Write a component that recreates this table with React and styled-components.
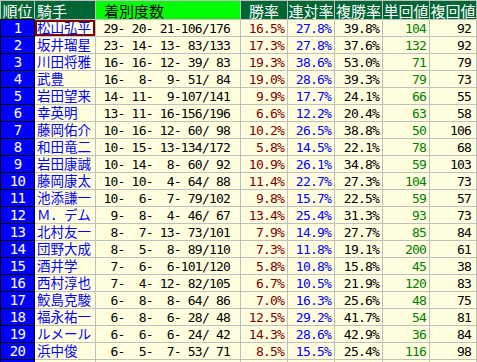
import React from "react";
import styled, { createGlobalStyle } from "styled-components";

const rows = [
  ["松山弘平", [29, 20, 21, 106, 176], "16.5%", "27.8%", "39.8%", 104, 92],
  ["坂井瑠星", [23, 14, 13, 83, 133], "17.3%", "27.8%", "37.6%", 132, 92],
  ["川田将雅", [16, 16, 12, 39, 83], "19.3%", "38.6%", "53.0%", 71, 79],
  ["武豊", [16, 8, 9, 51, 84], "19.0%", "28.6%", "39.3%", 79, 73],
  ["岩田望来", [14, 11, 9, 107, 141], "9.9%", "17.7%", "24.1%", 66, 55],
  ["幸英明", [13, 11, 16, 156, 196], "6.6%", "12.2%", "20.4%", 63, 58],
  ["藤岡佑介", [10, 16, 12, 60, 98], "10.2%", "26.5%", "38.8%", 50, 106],
  ["和田竜二", [10, 15, 13, 134, 172], "5.8%", "14.5%", "22.1%", 78, 68],
  ["岩田康誠", [10, 14, 8, 60, 92], "10.9%", "26.1%", "34.8%", 59, 103],
  ["藤岡康太", [10, 10, 4, 64, 88], "11.4%", "22.7%", "27.3%", 104, 73],
  ["池添謙一", [10, 6, 7, 79, 102], "9.8%", "15.7%", "22.5%", 59, 57],
  ["Ｍ．デム", [9, 8, 4, 46, 67], "13.4%", "25.4%", "31.3%", 93, 73],
  ["北村友一", [8, 7, 13, 73, 101], "7.9%", "14.9%", "27.7%", 85, 84],
  ["団野大成", [8, 5, 8, 89, 110], "7.3%", "11.8%", "19.1%", 200, 61],
  ["酒井学", [7, 6, 6, 101, 120], "5.8%", "10.8%", "15.8%", 45, 38],
  ["西村淳也", [7, 4, 12, 82, 105], "6.7%", "10.5%", "21.9%", 120, 83],
  ["鮫島克駿", [6, 8, 8, 64, 86], "7.0%", "16.3%", "25.6%", 48, 75],
  ["福永祐一", [6, 8, 6, 28, 48], "12.5%", "29.2%", "41.7%", 54, 81],
  ["ルメール", [6, 6, 6, 24, 42], "14.3%", "28.6%", "42.9%", 36, 84],
  ["浜中俊", [6, 5, 7, 53, 71], "8.5%", "15.5%", "25.4%", 116, 98],
];

const fmtCounts = ([a, b, c, d, e]) =>
  `${String(a).padStart(2)}-${String(b).padStart(3)}-${String(c).padStart(3)}-${String(d).padStart(3)}/${String(e).padStart(3)}`;

const GlobalStyle = createGlobalStyle`
  body {
    margin: 0;
    background: #ffffff;
    overflow: hidden;
  }
`;

const Grid = styled.div`
  display: grid;
  grid-template-columns: 33px 60px 144px 46px 46px 47px 46px 46px;
  grid-auto-rows: 16px;
  grid-template-rows: 18px;
  gap: 1px;
  padding: 1px;
  width: 477px;
  box-sizing: border-box;
  background: #c0c0c0;
`;

const HeadCell = styled.div`
  display: flex;
  align-items: center;
  justify-content: ${({ $align }) => $align || "center"};
  padding: ${({ $pad }) => $pad || "0"};
  background: ${({ $bright }) => ($bright ? "#00ff00" : "#006633")};
  color: ${({ $bright }) => ($bright ? "#000000" : "#ffffff")};
  font-family: "Noto Sans CJK JP", sans-serif;
  font-size: 15px;
  line-height: 1;
  white-space: nowrap;
`;

const RankCell = styled.div`
  display: flex;
  align-items: center;
  justify-content: center;
  background: #0000ff;
  color: #ffffff;
  box-shadow: 0 0 0 1px #000000;
  font-family: "DejaVu Sans Mono", monospace;
  font-size: 14px;
  line-height: 1;
  letter-spacing: -0.8px;
`;

const NameCell = styled.div`
  display: flex;
  align-items: center;
  padding-left: 2px;
  background: #ffffe0;
  color: #0000ff;
  font-family: "Noto Sans CJK JP", sans-serif;
  font-size: 13.5px;
  line-height: 1;
  white-space: nowrap;
  box-shadow: ${({ $mark }) => ($mark ? "inset 0 0 0 2px #800000" : "none")};
`;

const NumCell = styled.div`
  display: flex;
  align-items: center;
  justify-content: flex-end;
  padding-right: ${({ $pad }) => $pad || "3px"};
  background: #ffffe0;
  color: ${({ $color }) => $color || "#000000"};
  font-family: "DejaVu Sans Mono", monospace;
  font-size: 13px;
  line-height: 1;
  letter-spacing: -0.8px;
  white-space: pre;
`;

export default function App() {
  return (
    <>
      <GlobalStyle />
      <Grid>
        <HeadCell>順位</HeadCell>
        <HeadCell $align="flex-start" $pad="0 0 0 2px">騎手</HeadCell>
        <HeadCell $bright $align="flex-start" $pad="0 0 0 8px">着別度数</HeadCell>
        <HeadCell>勝率</HeadCell>
        <HeadCell>連対率</HeadCell>
        <HeadCell>複勝率</HeadCell>
        <HeadCell>単回値</HeadCell>
        <HeadCell>複回値</HeadCell>
        {rows.map(([name, counts, win, ren, fuku, tan, fukuVal], i) => (
          <React.Fragment key={name}>
            <RankCell>{i + 1}</RankCell>
            <NameCell $mark={i === 0}>{name}</NameCell>
            <NumCell $pad="10px">{fmtCounts(counts)}</NumCell>
            <NumCell $color="#800000">{win}</NumCell>
            <NumCell $color="#0000ff">{ren}</NumCell>
            <NumCell>{fuku}</NumCell>
            <NumCell $color="#008000">{tan}</NumCell>
            <NumCell $pad="5px">{fukuVal}</NumCell>
          </React.Fragment>
        ))}
        <RankCell />
        <NameCell />
        <NumCell />
        <NumCell />
        <NumCell />
        <NumCell />
        <NumCell />
        <NumCell />
      </Grid>
    </>
  );
}
